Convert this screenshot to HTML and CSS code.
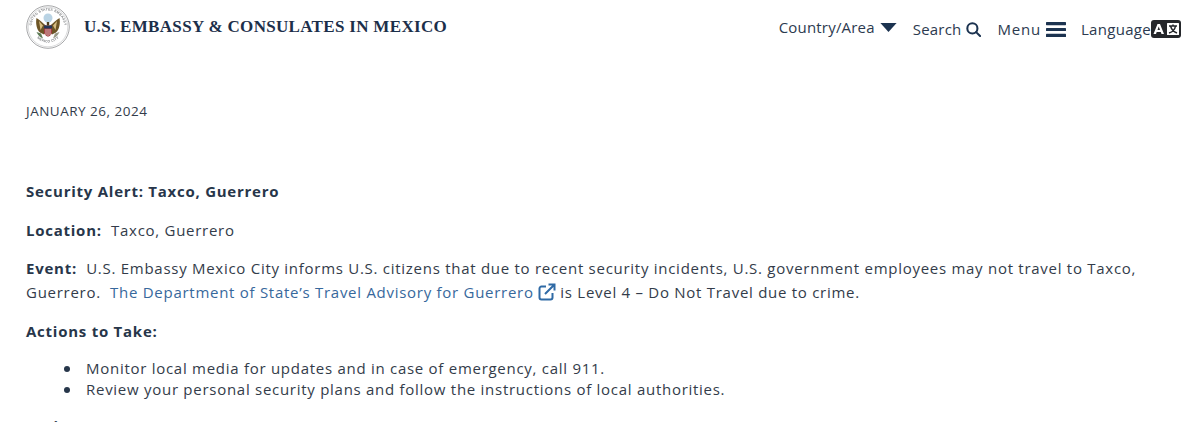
FILE: index.html
```html
<!DOCTYPE html>
<html lang="en">
<head>
<meta charset="utf-8">
<title>Security Alert: Taxco, Guerrero</title>
<link rel="stylesheet" href="styles.css">
</head>
<body>
<header class="site-header">
  <div class="brand">
    <svg class="seal" viewBox="0 0 44 44" aria-hidden="true">
      <defs>
        <path id="seal-top" d="M5.500 22A16.500 16.500 0 0 1 38.500 22"/>
        <path id="seal-bottom" d="M7 27A16 16 0 0 0 37 27"/>
      </defs>
      <circle cx="22" cy="22" r="21.300" fill="#fff" stroke="#8f9193" stroke-width="0.800"/>
      <circle cx="22" cy="22" r="19.800" fill="none" stroke="#b5b6b8" stroke-width="0.500"/>
      <text class="seal-text"><textPath href="#seal-top" startOffset="50%" text-anchor="middle">UNITED STATES EMBASSY</textPath></text>
      <text class="seal-text"><textPath href="#seal-bottom" startOffset="50%" text-anchor="middle">MEXICO CITY</textPath></text>
      <circle cx="22" cy="13" r="4.500" fill="#b9d3e4"/>
      <path d="M20.500 21C17 18.500 14 15 10.500 13C9.500 18 10.500 24.500 14 27.500L18 29.500L20.500 26Z" fill="#6d5526"/>
      <path d="M23.500 21C27 18.500 30 15 33.500 13C34.500 18 33.500 24.500 30 27.500L26 29.500L23.500 26Z" fill="#6d5526"/>
      <path d="M13 16L17 20.500L14.500 25ZM31 16L27 20.500L29.500 25Z" fill="#d6bd83"/>
      <path d="M18 20.500H26V27C26 29 24 31 22 32C20 31 18 29 18 27Z" fill="#a23b3f"/>
      <path d="M18 20.500H26V23.500H18Z" fill="#25385a"/>
      <path d="M20 24V30M22 24V32M24 24V30" stroke="#efe9e4" stroke-width="0.700"/>
      <path d="M10.500 27C12 30.500 14.500 32.500 17 33.500L15 28.500Z" fill="#5c7a55"/>
      <path d="M33.500 27C32 30.500 29.500 32.500 27 33.500L29 28.500Z" fill="#9a9a88"/>
      <path d="M20.800 17H23.200V20.500H20.800Z" fill="#4c3c1c"/>
    </svg>
    <span class="brand-name">U.S. Embassy &amp; Consulates in Mexico</span>
  </div>
  <nav class="site-nav">
    <a class="nav-item nav-country">Country/Area<svg class="icon-caret" viewBox="0 0 18 10" aria-hidden="true"><path d="M0 0H18L9 10Z"/></svg></a>
    <a class="nav-item nav-search">Search<svg class="icon-search" viewBox="0 0 16 16" aria-hidden="true"><circle cx="6.800" cy="6.800" r="5.400"/><path d="M10.800 10.800L15 15"/></svg></a>
    <a class="nav-item nav-menu">Menu<svg class="icon-menu" viewBox="0 0 20 15" aria-hidden="true"><rect y="0" width="20" height="3.200" rx="0.600"/><rect y="5.900" width="20" height="3.200" rx="0.600"/><rect y="11.800" width="20" height="3.200" rx="0.600"/></svg></a>
    <a class="nav-item nav-language">Language<svg class="lang-badge" viewBox="0 0 30 18" aria-hidden="true"><rect width="30" height="18" rx="3" fill="#25272b"/><path d="M2.500 14L6.500 4H9L13 14H10.500L9.800 12H5.700L5 14ZM6.500 10H9L7.750 6.500Z" fill="#fff" fill-rule="evenodd"/><rect x="16" y="3" width="12" height="12" rx="0.500" fill="#fff"/><path d="M18 6H26M22 4.500V6M19.500 6C20.500 9.500 23.500 12 26 13M24.500 6C24 9 21.500 12 18 13" fill="none" stroke="#25272b" stroke-width="1.500"/></svg></a>
  </nav>
</header>
<main class="article">
  <p class="date">JANUARY 26, 2024</p>
  <p class="title"><strong>Security Alert: Taxco, Guerrero</strong></p>
  <p><strong>Location:</strong>&nbsp; Taxco, Guerrero</p>
  <p><strong>Event:</strong>&nbsp; U.S. Embassy Mexico City informs U.S. citizens that due to recent security incidents, U.S. government employees may not travel to Taxco, Guerrero.&nbsp; <a class="ext-link" href="#">The Department of State’s Travel Advisory for Guerrero<svg class="icon-ext" viewBox="0 0 18 18" aria-hidden="true"><path d="M8 3.500H3.500A2 2 0 0 0 1.500 5.500V14.500A2 2 0 0 0 3.500 16.500H12.500A2 2 0 0 0 14.500 14.500V10"/><path d="M7 11L16 2M10.500 1.500H16.500V7.500"/></svg></a> is Level 4 – Do Not Travel due to crime.</p>
  <p><strong>Actions to Take:</strong></p>
  <ul class="actions">
    <li>Monitor local media for updates and in case of emergency, call 911.</li>
    <li>Review your personal security plans and follow the instructions of local authorities.</li>
  </ul>
  <p><strong>Assistance:</strong></p>
</main>
</body>
</html>
```
FILE: styles.css
```css
html, body {
  margin: 0;
  padding: 0;
  background: #fff;
  height: 422px;
  overflow: hidden;
}
body {
  font-family: "Open Sans", sans-serif;
  font-size: 15px;
  line-height: 24px;
  letter-spacing: 0.725px;
  color: #333c4a;
}
.site-header {
  display: flex;
  align-items: flex-start;
  justify-content: space-between;
  height: 54px;
  padding: 0 19px 0 26px;
  box-sizing: border-box;
}
.brand {
  display: flex;
  align-items: center;
  gap: 14px;
  padding-top: 5px;
}
.seal {
  width: 44px;
  height: 44px;
  display: block;
  filter: blur(0.300px);
}
.seal-text {
  font-family: "Liberation Sans", sans-serif;
  font-size: 3.400px;
  font-weight: 700;
  letter-spacing: 0.200px;
  fill: #7d7f82;
}
.brand-name {
  font-family: "Liberation Serif", serif;
  font-weight: 700;
  font-size: 17px;
  letter-spacing: 0.320px;
  text-transform: uppercase;
  color: #1c2f4a;
}
.site-nav {
  display: flex;
  align-items: center;
  gap: 15px;
  height: 54px;
  color: #2c3a4f;
  font-size: 15px;
  letter-spacing: 0.200px;
}
.nav-item {
  display: flex;
  align-items: center;
  gap: 5px;
  margin-top: 4px;
}
.nav-country {
  margin-top: 0;
  margin-right: 1px;
}
.nav-menu {
  letter-spacing: 0.800px;
  margin-left: 1px;
}
.icon-caret {
  width: 17px;
  height: 9px;
  fill: #1c3350;
}
.icon-search {
  width: 15px;
  height: 15px;
  fill: none;
  stroke: #1c3350;
  stroke-width: 2.200;
  stroke-linecap: round;
}
.icon-menu {
  width: 20px;
  height: 15px;
  fill: #1c3350;
}
.nav-language {
  gap: 0;
  letter-spacing: 0.300px;
}
.lang-badge {
  display: block;
  width: 30px;
  height: 18px;
}
.article {
  padding: 0 26px;
}
.article p {
  margin: 0 0 14.500px;
}
.article .date {
  margin: 45px 0 56px;
  font-size: 13.500px;
  letter-spacing: 0.500px;
}
.article strong {
  font-weight: 700;
  color: #27364a;
  letter-spacing: 0.750px;
}
.ext-link {
  color: #37689c;
  text-decoration: none;
}
.icon-ext {
  width: 18px;
  height: 18px;
  margin-left: 4px;
  vertical-align: -3px;
  fill: none;
  stroke: #2f6aa5;
  stroke-width: 2;
}
.actions {
  margin: 15.500px 0 14px;
  padding: 0 0 0 38px;
  list-style: none;
  line-height: 21px;
}
.actions li {
  display: flex;
  align-items: center;
  gap: 16px;
}
.actions li::before {
  content: "";
  flex: none;
  width: 6px;
  height: 6px;
  border-radius: 50%;
  background: #27364a;
}
```
